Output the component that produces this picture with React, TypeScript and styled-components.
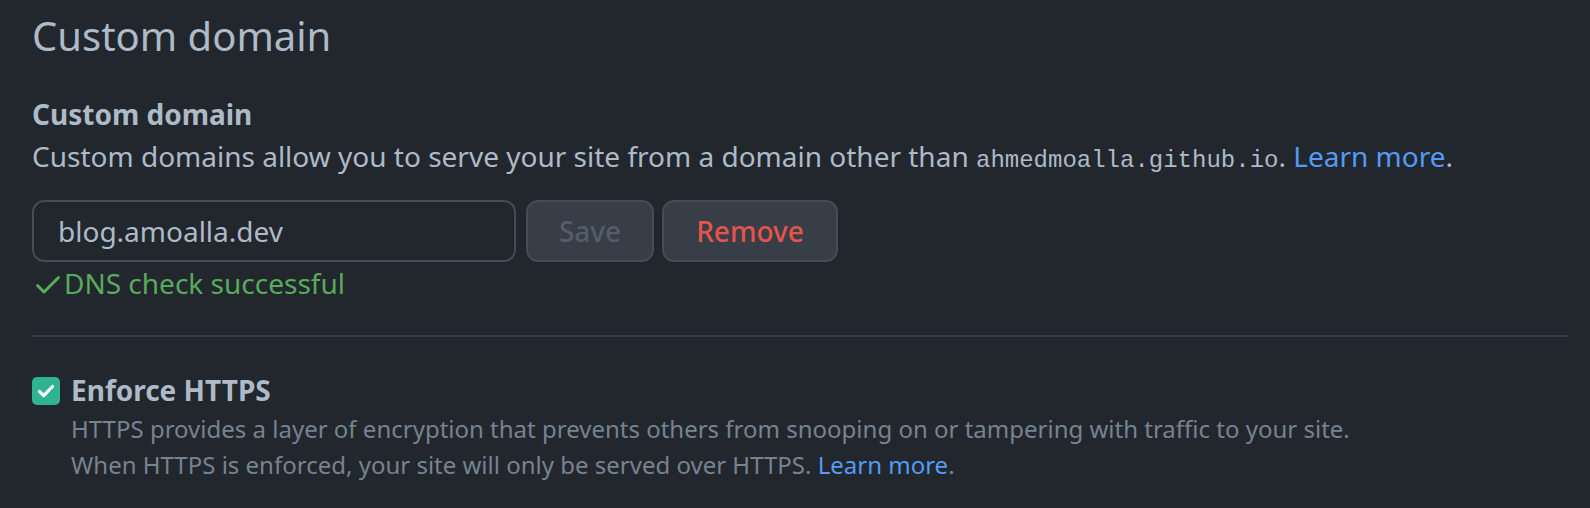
import styled, { createGlobalStyle } from 'styled-components'

const GlobalStyle = createGlobalStyle`
  html, body {
    margin: 0;
    padding: 0;
    background-color: #22272e;
  }
  body {
    font-family: 'Noto Sans', 'Open Sans', sans-serif;
    color: #adbac7;
  }
`

const Page = styled.div`
  display: flex;
  flex-flow: column nowrap;
  min-height: 508px;
  padding: 6px 22px 0 32px;
  box-sizing: border-box;
  background-color: #22272e;
`

const Title = styled.h2`
  margin: 0;
  font-size: 40px;
  line-height: 60px;
  font-weight: 400;
  color: #adbac7;
`

const Section = styled.div`
  display: flex;
  flex-flow: column nowrap;
  margin-top: 27px;
`

const Heading = styled.h3`
  margin: 0;
  font-size: 28px;
  line-height: 42px;
  font-weight: 700;
  color: #adbac7;
`

const Text = styled.p`
  margin: 0;
  height: 42px;
  font-size: 28px;
  line-height: 42px;
  color: #adbac7;
`

const Code = styled.code`
  font-family: 'Liberation Mono', monospace;
  font-size: 24px;
  line-height: 1;
`

const Link = styled.a`
  color: #539bf5;
  text-decoration: none;
`

const FormRow = styled.div`
  display: flex;
  align-items: center;
  margin-top: 23px;
`

const Input = styled.input`
  width: 484px;
  height: 62px;
  box-sizing: border-box;
  padding: 0 24px;
  border: 2px solid #444c56;
  border-radius: 12px;
  background-color: #22272e;
  color: #adbac7;
  font-family: 'Noto Sans', sans-serif;
  font-size: 28px;
  outline: none;
`

const Button = styled.button<{ $danger?: boolean; $width: number; $gap: number }>`
  width: ${(p) => p.$width}px;
  height: 62px;
  margin-left: ${(p) => p.$gap}px;
  box-sizing: border-box;
  border: 2px solid #444c56;
  border-radius: 12px;
  background-color: #373e47;
  color: ${(p) => (p.$danger ? '#e5534b' : '#545d68')};
  font-family: 'Noto Sans', sans-serif;
  font-size: 28px;
  font-weight: 500;
  cursor: ${(p) => (p.$danger ? 'pointer' : 'default')};
`

const Status = styled.div`
  display: flex;
  align-items: center;
  font-size: 28px;
  line-height: 42px;
  color: #57ab5a;

  svg {
    flex: 0 0 auto;
    margin-top: 2px;
  }
`

const Divider = styled.hr`
  margin: 31px 0 0;
  border: 0;
  height: 2px;
  background-color: #373e47;
`

const CheckRow = styled.div`
  display: flex;
  align-items: flex-start;
  gap: 11px;
  margin-top: 32px;
`

const Box = styled.span`
  flex: 0 0 auto;
  display: flex;
  align-items: center;
  justify-content: center;
  width: 28px;
  height: 28px;
  margin-top: 8px;
  border-radius: 5px;
  background-color: #2fb393;
`

const CheckBody = styled.div`
  display: flex;
  flex-flow: column nowrap;
`

const Label = styled.label`
  font-size: 28px;
  line-height: 42px;
  font-weight: 700;
  color: #adbac7;
`

const Note = styled.p`
  margin: 0;
  font-size: 24px;
  line-height: 36px;
  color: #768390;
`

const CheckIcon = () => (
  <svg width='32' height='32' viewBox='0 0 16 16' fill='#57ab5a'>
    <path d='M13.78 4.22a.75.75 0 0 1 0 1.06l-7.25 7.25a.75.75 0 0 1-1.06 0L2.22 9.28a.751.751 0 0 1 .018-1.042.751.751 0 0 1 1.042-.018L6 10.94l6.72-6.72a.75.75 0 0 1 1.06 0Z' />
  </svg>
)

const BoxTick = () => (
  <svg width='20' height='20' viewBox='0 0 20 20' fill='none'>
    <path d='M3.5 10.5l4.2 4.2 8.8-9.2' stroke='#fff' strokeWidth='3.2' strokeLinecap='round' strokeLinejoin='round' />
  </svg>
)

const App = () => {
  return (
    <>
      <GlobalStyle />
      <Page>
        <Title>Custom domain</Title>
        <Section>
          <Heading>Custom domain</Heading>
          <Text>
            Custom domains allow you to serve your site from a domain other than{' '}
            <Code>ahmedmoalla.github.io</Code>. <Link href='#'>Learn more</Link>.
          </Text>
        </Section>
        <FormRow>
          <Input type='text' defaultValue='blog.amoalla.dev' />
          <Button $width={128} $gap={10} disabled>
            Save
          </Button>
          <Button $width={176} $gap={8} $danger>
            Remove
          </Button>
        </FormRow>
        <Status>
          <CheckIcon />
          DNS check successful
        </Status>
        <Divider />
        <CheckRow>
          <Box>
            <BoxTick />
          </Box>
          <CheckBody>
            <Label>Enforce HTTPS</Label>
            <Note>
              HTTPS provides a layer of encryption that prevents others from snooping on or tampering with traffic to your site.
            </Note>
            <Note>
              When HTTPS is enforced, your site will only be served over HTTPS. <Link href='#'>Learn more</Link>.
            </Note>
          </CheckBody>
        </CheckRow>
      </Page>
    </>
  )
}

export default App
